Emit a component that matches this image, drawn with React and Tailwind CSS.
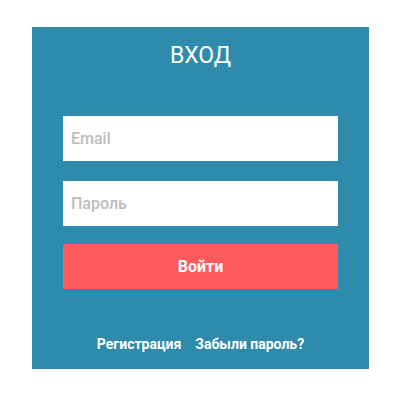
export default function App() {
  return (
    <div className="w-[400px] h-[400px] bg-white pt-[27px] pl-[32px]" style={{ fontFamily: 'Roboto, "Liberation Sans", sans-serif' }}>
      <div className="w-[337px] h-[342px] bg-[#2e8bac] px-[31px] flex flex-col">
        <h1 className="text-white text-[23px] leading-none text-center pt-[17px]">ВХОД</h1>
        <input
          className="mt-[49px] h-[45px] w-full bg-white px-[8px] text-[16px] font-medium text-gray-700 placeholder:text-[#bdbdbd] outline-none"
          placeholder="Email"
        />
        <input
          type="password"
          className="mt-[20px] h-[45px] w-full bg-white px-[8px] text-[16px] font-medium text-gray-700 placeholder:text-[#bdbdbd] outline-none"
          placeholder="Пароль"
        />
        <button className="mt-[18px] h-[45px] w-full bg-[#ff5a5c] text-white font-bold text-[16px]">Войти</button>
        <div className="mt-[45px] flex justify-center gap-[14px] text-white font-bold text-[14px]">
          <a>Регистрация</a>
          <a>Забыли пароль?</a>
        </div>
      </div>
    </div>
  );
}
